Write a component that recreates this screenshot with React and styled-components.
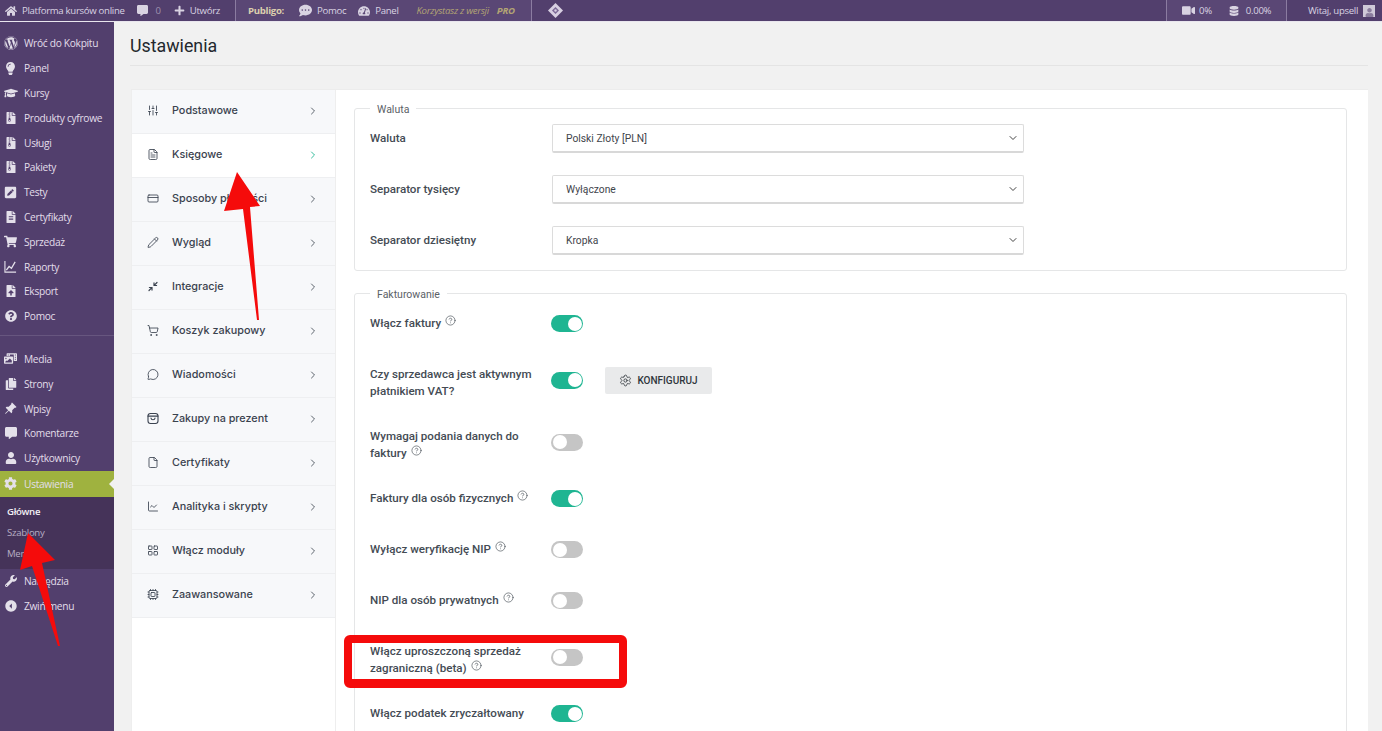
import styled, { createGlobalStyle } from 'styled-components';
import {
  SlidersVertical, FileText, CreditCard, Pencil, ShoppingCart, MessageCircle, File,
  ChartLine, LayoutGrid, Cpu, ChevronRight, ChevronDown, CircleHelp, Settings,
} from 'lucide-react';
import {
  FaWordpress, FaLightbulb, FaGraduationCap, FaFileArchive, FaPenSquare, FaFileAlt,
  FaShoppingCart, FaFileUpload, FaQuestionCircle, FaPhotoVideo, FaCopy,
  FaCommentAlt, FaUser, FaCog, FaWrench, FaHome, FaPlus, FaCommentDots, FaTachometerAlt,
  FaVideo, FaDatabase,
} from 'react-icons/fa';
import { BsPinAngleFill } from 'react-icons/bs';
import { IoMdArrowDropleftCircle } from 'react-icons/io';

const GlobalStyle = createGlobalStyle`
html, body {
  margin: 0;
  height: 100%;
  overflow: hidden;
  background: #f1f1f1;
}
* { box-sizing: border-box; }
`

const Page = styled.div`
position: relative;
width: 1382px;
height: 731px;
overflow: hidden;
display: flex;
flex-direction: column;
`
const TopBar = styled.div`
height: 22px;
flex: none;
display: flex;
align-items: center;
background: #523f6d;
color: #d9d3e2;
font: 9.6px "Open Sans", sans-serif;
letter-spacing: -0.3px;
border-bottom: 1px solid #e9e6ee;
`
const BarGroup = styled.div`
display: flex;
align-items: center;
height: 100%;
width: ${props => props.$width}px;
padding-left: ${props => props.$pad || 0}px;
background: ${props => props.$light ? '#5a4775' : 'transparent'};
border-left: ${props => props.$line ? '1px solid #8b7ca1' : 'none'};
`
const BarItem = styled.span`
display: inline-flex;
align-items: center;
gap: ${props => props.$gap || 5}px;
margin-left: ${props => props.$left || 0}px;
white-space: nowrap;
color: ${props => props.$color || 'inherit'};
font-style: ${props => props.$italic ? 'italic' : 'normal'};
font-weight: ${props => props.$bold ? 700 : 400};
svg { flex: none; }
b { font-weight: 700; margin-left: 3px; }
`
const Avatar = styled.span`
width: 12px;
height: 12px;
background: #cfc9d8;
color: #8a7d9d;
display: inline-flex;
align-items: flex-end;
justify-content: center;
`
const Body = styled.div`
flex: 1;
display: flex;
min-height: 0;
`
const Sidebar = styled.nav`
width: 114px;
flex: none;
background: #523f6d;
padding-top: 9px;
font: 10.2px "Open Sans", sans-serif;
letter-spacing: -0.3px;
color: #e2deea;
`
const MenuItem = styled.div`
position: relative;
height: ${props => props.$active ? 26 : 24.8}px;
display: flex;
align-items: center;
padding-left: 4px;
gap: 7px;
background: ${props => props.$active ? '#9fb23f' : 'transparent'};
svg { flex: none; color: #e4e0ea; }
span { white-space: nowrap; }
`
const MenuIcon = styled.span`
width: 13px;
display: inline-flex;
justify-content: center;
`
const ActiveNotch = styled.i`
position: absolute;
right: 0;
top: 8px;
border: 5px solid transparent;
border-right: 5px solid #f1f1f1;
border-left: 0;
`
const MenuDivider = styled.div`
height: 1px;
background: #67567f;
margin: 6px 0 11px;
`
const SubMenu = styled.div`
height: 72px;
background: #453359;
padding: 4px 0 0 7px;
font-size: 9.6px;
color: #b7aec4;
`
const SubItem = styled.div`
height: 21px;
line-height: 21px;
color: ${props => props.$current ? '#f2f0f5' : 'inherit'};
font-weight: ${props => props.$current ? 600 : 400};
`
const Main = styled.main`
flex: 1;
padding-left: 16px;
padding-right: 14px;
min-width: 0;
`
const Title = styled.h1`
margin: 0;
height: 44px;
padding-top: 12px;
font: 400 17.8px/24px Roboto, sans-serif;
color: #23282d;
border-bottom: 1px solid #e4e4e4;
`
const Panel = styled.div`
margin: 23px 0 0 1px;
display: flex;
background: #fff;
height: 700px;
border-top: 1px solid #ececec;
`
const Tabs = styled.div`
width: 205px;
flex: none;
border-left: 1px solid #eeeeee;
border-right: 1px solid #eeeeee;
`
const Tab = styled.div`
height: 44px;
display: flex;
align-items: center;
padding: 0 16px 2px 15px;
background: ${props => props.$active ? '#fff' : '#f7f8fa'};
border-bottom: 1px solid #eeeff1;
font: 500 10.8px Inter, sans-serif;
color: #3a424e;
`
const TabName = styled.span`
flex: 1;
margin-left: 13px;
white-space: nowrap;
`
const TabIcon = styled.span`
width: 12px;
display: inline-flex;
justify-content: center;
color: #3b4350;
`
const Content = styled.div`
flex: 1;
padding: 10px 21px 0 18px;
min-width: 0;
`
const Group = styled.fieldset`
margin: 0 0 14px;
padding: ${props => props.$top}px 15px 0;
border: 1.5px solid #e5e6e7;
border-radius: 3px;
`
const Legend = styled.legend`
margin-left: 0;
padding: 4px 7px 0 7px;
font: 400 10.5px/12px Roboto, sans-serif;
color: #5b6167;
`
const SelectRow = styled.div`
display: flex;
align-items: center;
height: 29px;
margin-bottom: 22px;
&:last-child { margin-bottom: 15px; }
`
const Label = styled.div`
width: 166px;
margin-right: 16px;
flex: none;
font: 500 11.6px/17px Roboto, sans-serif;
color: #444b54;
`
const Select = styled.div`
width: 472px;
height: 29px;
display: flex;
align-items: center;
justify-content: space-between;
padding: 0 4px 0 13px;
background: #fff;
border: 1px solid #dcdcdc;
border-bottom: 2px solid #d8d8d8;
border-radius: 2px;
font: 400 10.3px Roboto, sans-serif;
color: #3f454c;
`
const SwitchRow = styled.div`
display: flex;
align-items: center;
min-height: 29px;
margin-bottom: 22px;
`
const SwitchLabel = styled(Label)`
align-self: flex-start;
padding-top: 6px;
svg { margin-left: 4px; vertical-align: 1px; color: #444b53; }
`
const Toggle = styled.span`
width: 32px;
height: 17px;
flex: none;
margin-left: -1px;
border-radius: 9px;
display: flex;
align-items: center;
padding: 0 1.5px;
justify-content: ${props => props.$on ? 'flex-end' : 'flex-start'};
background: ${props => props.$on ? '#1fb592' : '#c5c5c5'};
&::after {
  content: "";
  width: 14px;
  height: 14px;
  border-radius: 50%;
  background: #fff;
}
`
const ConfigButton = styled.button`
margin-left: 22px;
width: 107px;
height: 27px;
display: flex;
align-items: center;
justify-content: center;
gap: 5px;
border: 0;
border-radius: 2px;
background: #e9eaeb;
font: 500 10px Roboto, sans-serif;
color: #30363c;
`
const Overlay = styled.svg`
position: absolute;
left: 0;
top: 0;
pointer-events: none;
`
const Highlight = styled.div`
position: absolute;
left: 344px;
top: 635px;
width: 283px;
height: 53px;
border: 8px solid #f50b0b;
border-bottom-width: 9px;
border-radius: 6px;
pointer-events: none;
`

const firstMenu = [
  [FaWordpress, 'Wróć do Kokpitu', 14],
  [FaLightbulb, 'Panel', 13],
  [FaGraduationCap, 'Kursy', 14],
  [FaFileArchive, 'Produkty cyfrowe', 12],
  [FaFileArchive, 'Usługi', 12],
  [FaFileArchive, 'Pakiety', 12],
  [FaPenSquare, 'Testy', 13],
  [FaFileAlt, 'Certyfikaty', 12],
  [FaShoppingCart, 'Sprzedaż', 13],
  [ReportIcon, 'Raporty', 13],
  [FaFileUpload, 'Eksport', 12],
  [FaQuestionCircle, 'Pomoc', 12],
];
const secondMenu = [
  [FaPhotoVideo, 'Media', 13],
  [FaCopy, 'Strony', 12],
  [BsPinAngleFill, 'Wpisy', 13],
  [FaCommentAlt, 'Komentarze', 12],
  [FaUser, 'Użytkownicy', 12],
];
const tabs = [
  [SlidersVertical, 'Podstawowe'],
  [FileText, 'Księgowe'],
  [CreditCard, 'Sposoby płatności'],
  [Pencil, 'Wygląd'],
  [MergeIcon, 'Integracje'],
  [ShoppingCart, 'Koszyk zakupowy'],
  [MessageCircle, 'Wiadomości'],
  [BagIcon, 'Zakupy na prezent'],
  [File, 'Certyfikaty'],
  [ChartLine, 'Analityka i skrypty'],
  [LayoutGrid, 'Włącz moduły'],
  [Cpu, 'Zaawansowane'],
];
const selects = [
  ['Waluta', 'Polski Złoty [PLN]'],
  ['Separator tysięcy', 'Wyłączone'],
  ['Separator dziesiętny', 'Kropka'],
];
const switches = [
  { label: 'Włącz faktury', on: true, help: true },
  { label: 'Czy sprzedawca jest aktywnym płatnikiem VAT?', on: true, button: true },
  { label: 'Wymagaj podania danych do faktury', on: false, help: true },
  { label: 'Faktury dla osób fizycznych', on: true, help: true },
  { label: 'Wyłącz weryfikację NIP', on: false, help: true },
  { label: 'NIP dla osób prywatnych', on: false, help: true },
  { label: 'Włącz uproszczoną sprzedaż zagraniczną (beta)', on: false, help: true },
  { label: 'Włącz podatek zryczałtowany', on: true },
];

function ReportIcon({ size }) {
  return (
    <svg width={size} height={size} viewBox="0 0 14 14" fill="none" stroke="currentColor" strokeWidth="1.2">
      <path d="M1 1v12h12" />
      <path d="M2.5 11l3-4 2.5 2 4-7" strokeWidth="1.4" />
    </svg>
  );
}

function MergeIcon({ size }) {
  return (
    <svg width={size} height={size} viewBox="0 0 12 12" fill="none" stroke="currentColor" strokeWidth="1.2" strokeLinecap="round">
      <path d="M2 10l2.6-2.6M2.4 7h2.6v2.6" />
      <path d="M10 2L7.4 4.6M9.6 5H7V2.4" />
    </svg>
  );
}

function BagIcon({ size }) {
  return (
    <svg width={size} height={size} viewBox="0 0 12 12" fill="none" stroke="currentColor" strokeWidth="1.1" strokeLinecap="round">
      <rect x="1" y="1" width="10" height="10" rx="2.5" />
      <path d="M1 3.6h10M4 5.6c.3 2.2 3.7 2.2 4 0" />
    </svg>
  );
}

function DiamondIcon() {
  return (
    <svg width="15" height="15" viewBox="0 0 15 15">
      <path d="M7.5 0L15 7.5 7.5 15 0 7.5z" fill="#d8d0e2" />
      <path d="M7.5 4L11 7.5 7.5 11 4 7.5z" fill="#7a6795" />
      <circle cx="7.5" cy="7.5" r="1.2" fill="#d8d0e2" />
    </svg>
  );
}

function App() {
  const renderMenu = (items) => items.map(([Icon, name, size]) => (
    <MenuItem key={name}>
      <MenuIcon><Icon size={size} /></MenuIcon>
      <span>{name}</span>
    </MenuItem>
  ));

  return (
    <Page>
      <GlobalStyle />
      <TopBar>
        <BarGroup $width={235} $pad={5}>
          <BarItem $gap={5}><FaHome size={12} />Platforma kursów online</BarItem>
          <BarItem $left={12} $gap={8}>
            <FaCommentAlt size={11} /><span style={{ opacity: 0.55 }}>0</span>
          </BarItem>
          <BarItem $left={13}><FaPlus size={11} />Utwórz</BarItem>
        </BarGroup>
        <BarGroup $width={296} $pad={12} $light $line>
          <BarItem $bold $color="#dccfae">Publigo:</BarItem>
          <BarItem $left={15}><FaCommentDots size={13} />Pomoc</BarItem>
          <BarItem $left={12}><FaTachometerAlt size={12} />Panel</BarItem>
          <BarItem $left={18} $italic $gap={0} $color="#b3a474">Korzystasz z wersji<b>PRO</b></BarItem>
        </BarGroup>
        <BarGroup $width={635} $pad={16} $line><DiamondIcon /></BarGroup>
        <BarGroup $width={120} $pad={15} $light $line>
          <BarItem $gap={4}><FaVideo size={13} />0%</BarItem>
          <BarItem $left={17} $gap={7}><FaDatabase size={10} />0.00%</BarItem>
        </BarGroup>
        <BarGroup $width={96} $pad={21} $line>
          <BarItem $gap={5}>Witaj, upsell<Avatar><FaUser size={9} /></Avatar></BarItem>
        </BarGroup>
      </TopBar>
      <Body>
        <Sidebar>
          {renderMenu(firstMenu)}
          <MenuDivider />
          {renderMenu(secondMenu)}
          <MenuItem $active>
            <MenuIcon><FaCog size={13} /></MenuIcon>
            <span>Ustawienia</span>
            <ActiveNotch />
          </MenuItem>
          <SubMenu>
            <SubItem $current>Główne</SubItem>
            <SubItem>Szablony</SubItem>
            <SubItem>Menu</SubItem>
          </SubMenu>
          <MenuItem>
            <MenuIcon><FaWrench size={12} /></MenuIcon>
            <span>Narzędzia</span>
          </MenuItem>
          <MenuItem>
            <MenuIcon><IoMdArrowDropleftCircle size={14} /></MenuIcon>
            <span>Zwiń menu</span>
          </MenuItem>
        </Sidebar>
        <Main>
          <Title>Ustawienia</Title>
          <Panel>
            <Tabs>
              {tabs.map(([Icon, name], index) => (
                <Tab key={name} $active={index === 1}>
                  <TabIcon><Icon size={13} strokeWidth={1.7} /></TabIcon>
                  <TabName>{name}</TabName>
                  <ChevronRight size={12} strokeWidth={1.8} color={index === 1 ? '#1fb592' : '#4a515b'} />
                </Tab>
              ))}
            </Tabs>
            <Content>
              <Group $top={8}>
                <Legend>Waluta</Legend>
                {selects.map(([label, value]) => (
                  <SelectRow key={label}>
                    <Label>{label}</Label>
                    <Select>{value}<ChevronDown size={12} strokeWidth={2} color="#444" /></Select>
                  </SelectRow>
                ))}
              </Group>
              <Group $top={8}>
                <Legend>Fakturowanie</Legend>
                {switches.map((row) => (
                  <SwitchRow key={row.label}>
                    <SwitchLabel>
                      {row.label}
                      {row.help && <CircleHelp size={11} strokeWidth={1.4} />}
                    </SwitchLabel>
                    <Toggle $on={row.on} />
                    {row.button && (
                      <ConfigButton><Settings size={13} strokeWidth={1.5} />KONFIGURUJ</ConfigButton>
                    )}
                  </SwitchRow>
                ))}
              </Group>
            </Content>
          </Panel>
        </Main>
      </Body>
      <Highlight />
      <Overlay width="1382" height="731" viewBox="0 0 1382 731">
        <polygon points="237,172 260,206 250,207 259,320 257,320 243,209 224,211" fill="#f50b0b" />
        <polygon points="28,533 55,560 42,563 60,646 58,646 32,566 20,570" fill="#f50b0b" />
      </Overlay>
    </Page>
  );
}

export default App;
